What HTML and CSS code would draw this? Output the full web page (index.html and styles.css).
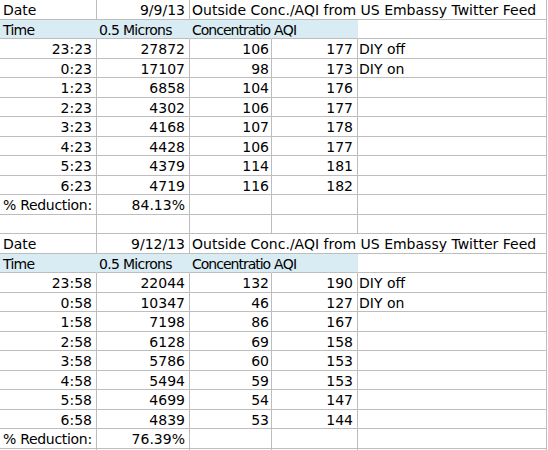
FILE: index.html
```html
<!DOCTYPE html>
<html>
<head>
<meta charset="utf-8">
<link rel="stylesheet" href="styles.css">
</head>
<body>
<div class="sheet">
  <div class="row"><div class="c">Date</div><div class="c r">9/9/13</div><div class="c title">Outside Conc./AQI from US Embassy Twitter Feed</div></div>
  <div class="row head"><div class="c">Time</div><div class="c">0.5 Microns</div><div class="c">Concentratio</div><div class="c">AQI</div><div class="c"></div></div>
  <div class="row"><div class="c r">23:23</div><div class="c r">27872</div><div class="c r">106</div><div class="c r">177</div><div class="c">DIY off</div></div>
  <div class="row"><div class="c r">0:23</div><div class="c r">17107</div><div class="c r">98</div><div class="c r">173</div><div class="c">DIY on</div></div>
  <div class="row"><div class="c r">1:23</div><div class="c r">6858</div><div class="c r">104</div><div class="c r">176</div><div class="c"></div></div>
  <div class="row"><div class="c r">2:23</div><div class="c r">4302</div><div class="c r">106</div><div class="c r">177</div><div class="c"></div></div>
  <div class="row"><div class="c r">3:23</div><div class="c r">4168</div><div class="c r">107</div><div class="c r">178</div><div class="c"></div></div>
  <div class="row"><div class="c r">4:23</div><div class="c r">4428</div><div class="c r">106</div><div class="c r">177</div><div class="c"></div></div>
  <div class="row"><div class="c r">5:23</div><div class="c r">4379</div><div class="c r">114</div><div class="c r">181</div><div class="c"></div></div>
  <div class="row"><div class="c r">6:23</div><div class="c r">4719</div><div class="c r">116</div><div class="c r">182</div><div class="c"></div></div>
  <div class="row"><div class="c label">% Reduction:</div><div class="c r">84.13%</div><div class="c"></div><div class="c"></div><div class="c"></div></div>
  <div class="row"><div class="c"></div><div class="c"></div><div class="c"></div><div class="c"></div><div class="c"></div></div>

  <div class="row"><div class="c">Date</div><div class="c r">9/12/13</div><div class="c title">Outside Conc./AQI from US Embassy Twitter Feed</div></div>
  <div class="row head"><div class="c">Time</div><div class="c">0.5 Microns</div><div class="c">Concentratio</div><div class="c">AQI</div><div class="c"></div></div>
  <div class="row"><div class="c r">23:58</div><div class="c r">22044</div><div class="c r">132</div><div class="c r">190</div><div class="c">DIY off</div></div>
  <div class="row"><div class="c r">0:58</div><div class="c r">10347</div><div class="c r">46</div><div class="c r">127</div><div class="c">DIY on</div></div>
  <div class="row"><div class="c r">1:58</div><div class="c r">7198</div><div class="c r">86</div><div class="c r">167</div><div class="c"></div></div>
  <div class="row"><div class="c r">2:58</div><div class="c r">6128</div><div class="c r">69</div><div class="c r">158</div><div class="c"></div></div>
  <div class="row"><div class="c r">3:58</div><div class="c r">5786</div><div class="c r">60</div><div class="c r">153</div><div class="c"></div></div>
  <div class="row"><div class="c r">4:58</div><div class="c r">5494</div><div class="c r">59</div><div class="c r">153</div><div class="c"></div></div>
  <div class="row"><div class="c r">5:58</div><div class="c r">4699</div><div class="c r">54</div><div class="c r">147</div><div class="c"></div></div>
  <div class="row"><div class="c r">6:58</div><div class="c r">4839</div><div class="c r">53</div><div class="c r">144</div><div class="c"></div></div>
  <div class="row"><div class="c label">% Reduction:</div><div class="c r">76.39%</div><div class="c"></div><div class="c"></div><div class="c"></div></div>
  <div class="row"><div class="c"></div><div class="c"></div><div class="c"></div><div class="c"></div><div class="c"></div></div>
</div>
</body>
</html>
```

FILE: styles.css
```css
html, body {
  margin: 0;
  padding: 0;
  background: #ffffff;
}

.sheet {
  width: 547px;
  font-family: "DejaVu Sans", sans-serif;
  font-size: 14px;
  color: #000000;
}

.row {
  display: grid;
  grid-template-columns: 97px 93px 82px 86px 189px;
  height: 19.5px;
}

.c {
  box-sizing: border-box;
  border-right: 1px solid #bdbdbd;
  border-bottom: 1px solid #bdbdbd;
  padding: 2px 4px 0 2px;
  line-height: 17px;
  white-space: nowrap;
  overflow: hidden;
}

.row > .c:nth-child(1) {
  padding-left: 3px;
}

.row > .c:nth-child(3) {
  padding-right: 2px;
}

.row > .c:nth-child(5) {
  padding-left: 1px;
}

.r {
  text-align: right;
}

.title {
  grid-column: span 3;
  overflow: visible;
}

.label {
  letter-spacing: -0.3px;
}

.head > .c {
  letter-spacing: -0.7px;
}

.head > .c:nth-child(3) {
  padding-right: 0;
  letter-spacing: -1px;
}

.head > .c:nth-child(-n+4) {
  background: #d9ecf3;
  border-right-color: transparent;
}
```
